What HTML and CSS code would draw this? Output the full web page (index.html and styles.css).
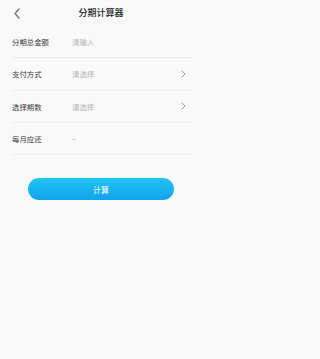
FILE: index.html
```html
<!DOCTYPE html>
<html lang="zh-CN">
<head>
<meta charset="utf-8">
<title>分期计算器</title>
<link rel="stylesheet" href="styles.css">
</head>
<body>
<div class="page">
  <header class="header">
    <span class="back">
      <svg width="6" height="11" viewBox="0 0 6 11"><path d="M5 1 L1 5.5 L5 10" fill="none" stroke="#707070" stroke-width="1.3" stroke-linecap="round" stroke-linejoin="round"/></svg>
    </span>
    <h1 class="title">分期计算器</h1>
    <span></span>
  </header>
  <div class="form">
    <div class="row">
      <span class="label">分期总金额</span>
      <span class="value placeholder">请输入</span>
    </div>
    <div class="row">
      <span class="label">支付方式</span>
      <span class="value placeholder">请选择</span>
      <svg class="arrow" width="5" height="8" viewBox="0 0 5 8"><path d="M1 1 L4 4 L1 7" fill="none" stroke="#9a9a9a" stroke-width="1" stroke-linecap="round" stroke-linejoin="round"/></svg>
    </div>
    <div class="row">
      <span class="label">选择期数</span>
      <span class="value placeholder">请选择</span>
      <svg class="arrow" width="5" height="8" viewBox="0 0 5 8"><path d="M1 1 L4 4 L1 7" fill="none" stroke="#9a9a9a" stroke-width="1" stroke-linecap="round" stroke-linejoin="round"/></svg>
    </div>
    <div class="row">
      <span class="label">每月应还</span>
      <span class="value dash">–</span>
    </div>
  </div>
  <div class="actions">
    <button class="btn">计算</button>
  </div>
</div>
</body>
</html>
```
FILE: styles.css
```css
html, body {
  margin: 0;
  padding: 0;
  background: #f9f9f9;
  font-family: "Noto Sans CJK SC", "Noto Sans", sans-serif;
}
.page {
  width: 202px;
  min-height: 359px;
  background: #f9f9f9;
}
.header {
  height: 26px;
  display: grid;
  grid-template-columns: 40px 1fr 40px;
  align-items: center;
}
.back {
  display: flex;
  padding-left: 14px;
  padding-top: 1px;
}
.title {
  margin: 0;
  text-align: center;
  font-size: 9px;
  font-weight: 500;
  color: #222;
  line-height: 26px;
}
.form {
  padding: 0 11px 0 12px;
}
.row {
  height: 32.3px;
  box-sizing: border-box;
  border-bottom: 1px solid #eeeeee;
  display: flex;
  align-items: center;
  font-size: 7.4px;
}
.label {
  width: 60px;
  color: #3a3a3a;
}
.value {
  flex: 1;
}
.placeholder {
  color: #b3b3b3;
}
.dash {
  color: #999;
}
.arrow {
  margin-right: 5px;
}
.actions {
  display: flex;
  justify-content: center;
  padding-top: 23px;
}
.btn {
  width: 146px;
  height: 22px;
  border: none;
  border-radius: 11px;
  background: linear-gradient(180deg, #22c4f6 0%, #12a2ea 100%);
  color: #fff;
  font-family: "Noto Sans CJK SC", "Noto Sans", sans-serif;
  font-size: 8px;
  padding: 0;
}
```
